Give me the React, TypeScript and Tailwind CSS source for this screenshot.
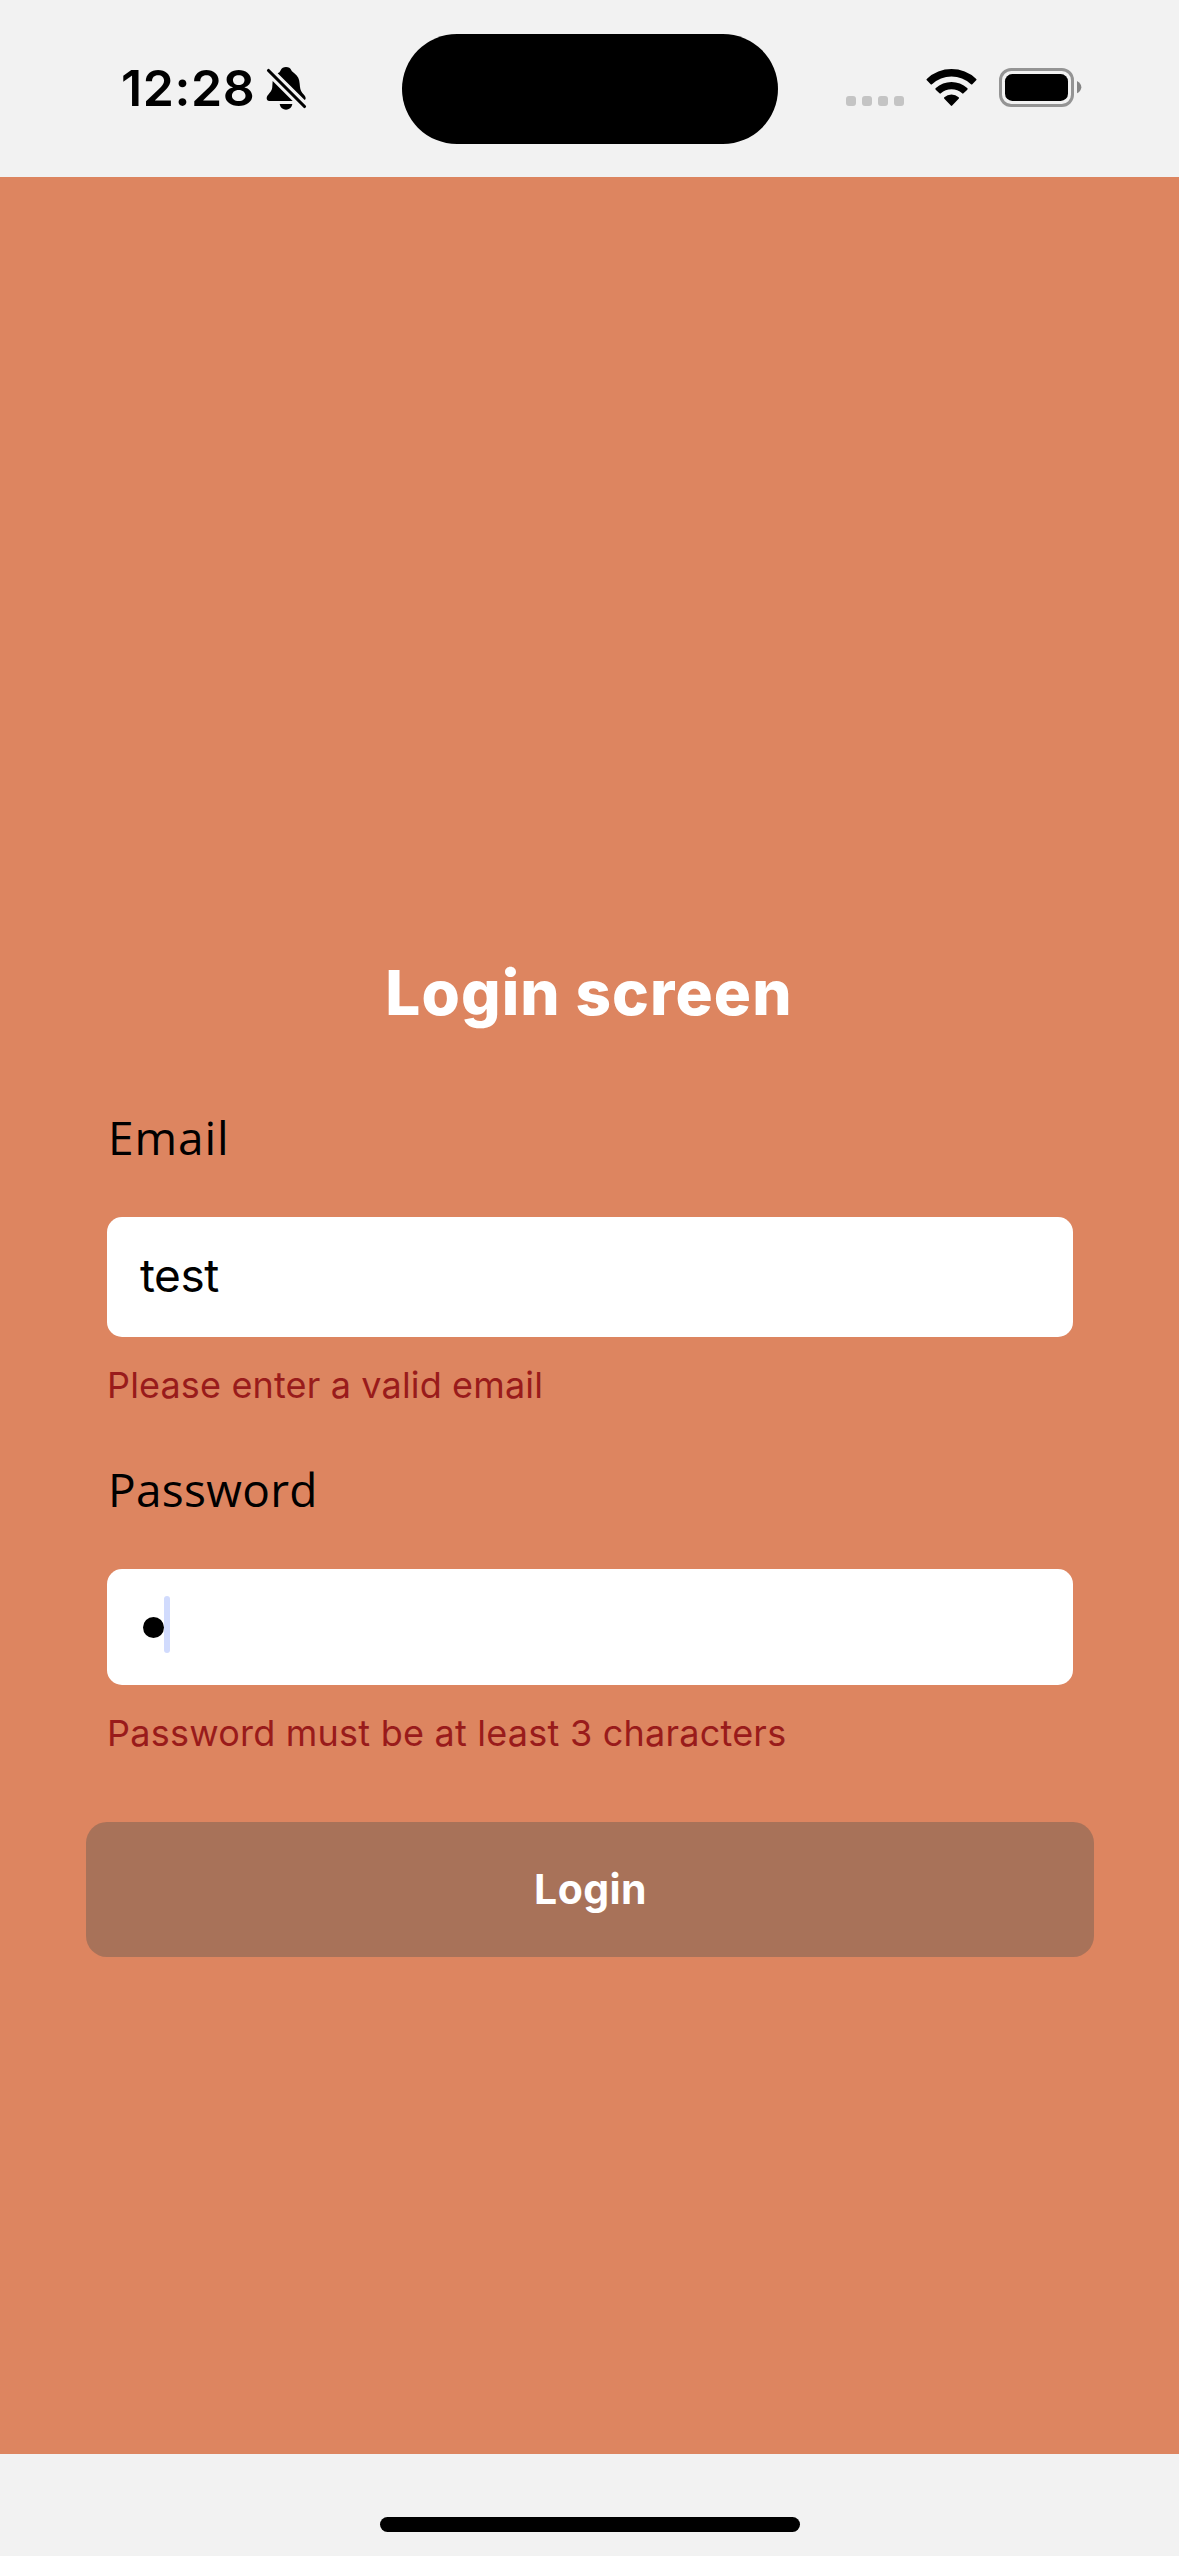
import React from "react";

function BellSlashIcon() {
  return (
    <svg viewBox="498 138 123 135" className="h-[45px] w-[41px]" aria-hidden="true">
      <path d="M533 160 C537 158 540 156 542 151 C545 144 551 141 558 141 C566 141 571 144 574 151 C576 155 579 157 583 160 C594 168 598 178 599 191 C600 204 601 210 607 219 C613 226 617 229 617 235 C617 237 616 239 614 240 Z" />
      <path d="M518 183 L578 243 H508 C503 243 500 240 500 235 C500 230 503 226 508 220 C515 212 517 206 517 198 Z" />
      <path d="M539 252 H577 C575 263 567 269 558 269 C549 269 541 263 539 252 Z" />
      <path d="M505.500 151.500 L613.500 259.500" stroke="black" strokeWidth="9.500" strokeLinecap="round" />
    </svg>
  );
}

function WifiIcon() {
  return (
    <svg viewBox="318 84 153 117" className="h-[39px] w-[51px]" aria-hidden="true">
      <path d="M321 116 A108 108 0 0 1 468 116 Q471 119 468.500 121 L457 132.500 Q455 134.500 453 132.500 A86 86 0 0 0 336 132.500 Q334 134.500 332 132.500 L320.500 121 Q318 119 321 116 Z" />
      <path d="M347.500 144 A69.500 69.500 0 0 1 441.500 144 Q444.500 146.500 442 149 L430.500 160 Q428.500 162 426.500 160 A47 47 0 0 0 362.500 160 Q360.500 162 358.500 160 L347 149 Q344.500 146.500 347.500 144 Z" />
      <path d="M373 171.500 A33 33 0 0 1 416 171.500 Q418.500 174 416 176 L396.500 196.500 Q394.500 199 392.500 196.500 L373 176 Q370.500 174 373 171.500 Z" />
    </svg>
  );
}

function BatteryIcon() {
  return (
    <svg viewBox="537 84 249 117" className="h-[39px] w-[83px]" aria-hidden="true">
      <rect x="541.500" y="88.500" width="216" height="108" rx="32" fill="none" stroke="#949494" strokeWidth="9" />
      <rect x="555" y="102" width="189" height="81" rx="22" />
      <path d="M771 123 C779 127 784 134 784 141.500 C784 149 779 156 771 160 Z" fill="#858585" />
    </svg>
  );
}

function StatusBar() {
  return (
    <header className="grid h-[177px] grid-cols-[401px_377px_401px] bg-[#f2f2f2]">
      <div className="flex items-center pb-px pl-[121px]">
        <span className="w-[145px] text-[50px] leading-[60px] font-semibold tracking-[0.6px]">12:28</span>
        <BellSlashIcon />
      </div>
      <div className="mt-[34px] ml-px h-[110px] w-[376px] rounded-full bg-black" />
      <div className="flex items-start pt-[68px] pl-[68px]">
        <div className="mt-7 flex gap-1.5">
          {[0, 1, 2, 3].map((dot) => (
            <span key={dot} className="size-2.5 rounded-[3px] bg-[#c4c4c4]" />
          ))}
        </div>
        <div className="ml-[22px]">
          <WifiIcon />
        </div>
        <div className="ml-[22px]">
          <BatteryIcon />
        </div>
      </div>
    </header>
  );
}

export default function App() {
  return (
    <div className="flex h-[2556px] w-[1179px] flex-col overflow-hidden bg-[#f2f2f2] font-['Inter',sans-serif] text-black">
      <StatusBar />
      <main className="flex h-[2277px] flex-col bg-[#dd8560] pt-[771px] pr-[85px] pl-[86px]">
        <h1 className="h-[90px] pr-0.5 text-center text-[62px] leading-[90px] font-extrabold tracking-[1.1px] text-white">
          Login screen
        </h1>
        <div className="mt-[69px] px-[21px]">
          <label className="block h-[60px] pl-px font-['Open_Sans',sans-serif] text-[46px] leading-[60px] tracking-[0.9px]">
            Email
          </label>
          <div className="mt-[50px] flex h-[120px] items-center rounded-[15px] bg-white pb-[4px] pl-[33px]">
            <span className="text-[46px] leading-[60px] tracking-[-0.5px]">test</span>
          </div>
          <p className="mt-[26px] h-[44px] text-[36px] leading-[44px] tracking-[0.15px] text-[#991b1b]">
            Please enter a valid email
          </p>
        </div>
        <div className="mt-[52px] px-[21px]">
          <label className="block h-[60px] pl-px font-['Open_Sans',sans-serif] text-[46px] leading-[60px] tracking-[0.3px]">
            Password
          </label>
          <div className="mt-[50px] flex h-[116px] rounded-[15px] bg-white pt-[27px] pl-[36px]">
            <span className="mt-[21px] size-[21px] rounded-full bg-black" />
            <span className="h-[57px] w-1.5 rounded-full bg-[#d1dbfd]" />
          </div>
          <p className="mt-[26px] h-[44px] text-[36px] leading-[44px] tracking-[0.23px] text-[#991b1b]">
            Password must be at least 3 characters
          </p>
        </div>
        <button className="mt-[67px] h-[135px] w-[1008px] rounded-[21px] bg-[#a87259] pl-px text-center text-[41px] font-bold tracking-[0.4px] text-white">
          Login
        </button>
      </main>
      <footer className="flex h-[102px] justify-center pt-[63px]">
        <div className="h-[15px] w-[420px] rounded-full bg-black" />
      </footer>
    </div>
  );
}
